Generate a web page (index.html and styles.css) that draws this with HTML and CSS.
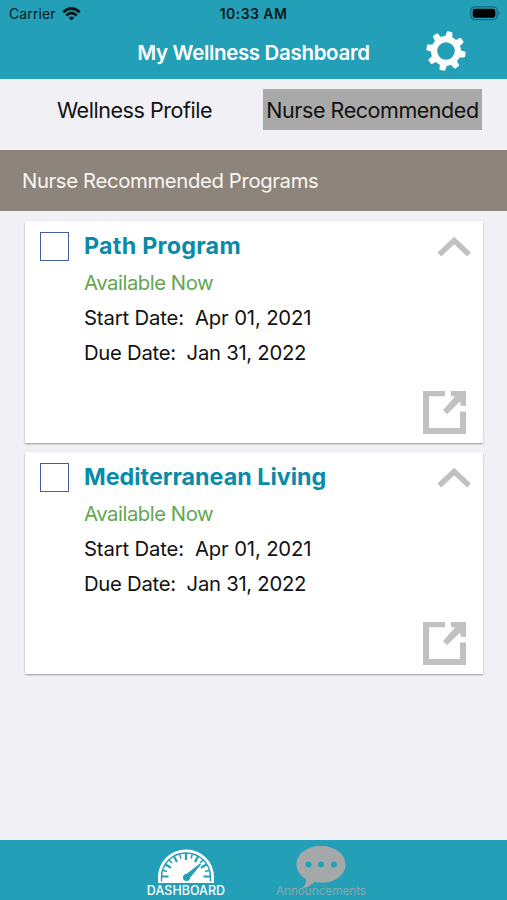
FILE: index.html
```html
<!DOCTYPE html>
<html lang="en">
<head>
<meta charset="utf-8">
<title>My Wellness Dashboard</title>
<link rel="stylesheet" href="styles.css">
</head>
<body>
<svg class="defs" width="0" height="0">
  <symbol id="chevron" viewBox="0 0 34 22"><path d="M2.300 18.500 17.200 4.500 32 18.500" fill="none" stroke="#c1c1c1" stroke-width="5.600"/></symbol>
  <symbol id="open" viewBox="0 0 44 44"><path d="M0 0H22V5.300H6V37H37V20.500H43V43H0Z" fill="#c1c1c1"/><path d="M27.700 0H43V15L37.700 14.700 37 10.500 24 23.200 20 19 32 5.500 28 5Z" fill="#c1c1c1"/></symbol>
</svg>
<header class="header">
  <div class="status">
    <div class="carrier"><span class="carrier-name">Carrier</span>
      <svg width="19" height="14" viewBox="0 0 19 14"><g fill="none" stroke="#08191d" stroke-width="2.700"><path d="M1.300 5.200Q9.500-2.200 17.700 5.200"/><path d="M4.200 8.400Q9.500 3.600 14.800 8.400"/></g><path d="M6.600 10.700Q9.500 8.300 12.400 10.700L9.500 13.600Z" fill="#08191d"/></svg>
    </div>
    <span class="time">10:33 AM</span>
    <svg class="battery" width="31" height="15" viewBox="0 0 31 15"><rect x=".8" y=".8" width="26.400" height="12.900" rx="4" fill="none" stroke="#176b7b" stroke-width="1.300"/><rect x="2.700" y="2.700" width="22.600" height="9.100" rx="2.300" fill="#000"/><path d="M28.500 5Q31 7.200 28.500 9.500Z" fill="#176b7b"/></svg>
  </div>
  <div class="titlebar">
    <h1 class="title">My Wellness Dashboard</h1>
    <svg class="gear" width="42" height="42" viewBox="-21 -21 42 42"><circle r="11.900" fill="none" stroke="#fff" stroke-width="6.200"/><g transform="rotate(11)" fill="#fff" stroke="#fff" stroke-width="2" stroke-linejoin="round"><g id="teeth"><path id="tooth" d="M-2.900-12-1.900-18.700H1.900L2.900-12Z"/><use href="#tooth" transform="rotate(90)"/><use href="#tooth" transform="rotate(180)"/><use href="#tooth" transform="rotate(270)"/></g><use href="#teeth" transform="rotate(45)"/></g></svg>
  </div>
</header>
<nav class="tabs">
  <span class="tab">Wellness Profile</span>
  <span class="tab active">Nurse Recommended</span>
</nav>
<h2 class="banner">Nurse Recommended Programs</h2>
<main class="programs">
  <article class="card">
    <span class="check"></span>
    <div class="details">
      <h3 class="name path">Path Program</h3>
      <p class="available">Available Now</p>
      <p class="start">Start Date:&nbsp; Apr 01, 2021</p>
      <p class="due">Due Date:&nbsp; Jan 31, 2022</p>
    </div>
    <div class="actions"><svg class="chevron"><use href="#chevron"/></svg><svg class="open"><use href="#open"/></svg></div>
  </article>
  <article class="card">
    <span class="check"></span>
    <div class="details">
      <h3 class="name">Mediterranean Living</h3>
      <p class="available">Available Now</p>
      <p class="start">Start Date:&nbsp; Apr 01, 2021</p>
      <p class="due">Due Date:&nbsp; Jan 31, 2022</p>
    </div>
    <div class="actions"><svg class="chevron"><use href="#chevron"/></svg><svg class="open"><use href="#open"/></svg></div>
  </article>
</main>
<footer class="footer">
  <div class="item dashboard">
    <svg width="58" height="36" viewBox="0 0 58 36"><path d="M1 34V28A28 27.500 0 0 1 57 28V34Z" fill="#fff"/><path d="M4.500 32.500V28A24.500 24 0 0 1 53.500 28V32.500" fill="none" stroke="#239fb8" stroke-width="1.500"/><g stroke="#239fb8" stroke-width="2.200"><path d="M5 27.500H11.500M46.500 27.500H53M29 4V11M8.500 15.500 14 18.800M49.500 15.500 44 18.800M17 7.500 20 13M41 7.500 38 13"/><path d="M6 21.500 10 22.500M12 11 15 14M22.800 5.500 23.900 9.500M35.200 5.500 34.100 9.500M46 11 43 14M52 21.500 48 22.500" stroke-width="1.500"/></g><path d="M27.500 26.500 43 14.500 44 15.500 32 30Z" fill="#239fb8"/><circle cx="29.500" cy="28.500" r="3.500" fill="#239fb8"/></svg>
    <span>DASHBOARD</span>
  </div>
  <div class="item announcements">
    <svg width="52" height="44" viewBox="0 0 52 44"><path d="M26 1C12 1 1.500 9 1.500 19.500C1.500 26 5.500 31 11 34C11.500 38 9.500 41 7.500 43C13.500 42.500 17 39.500 19.500 37Q22.500 37.800 26 37.800C40 37.800 50.500 30 50.500 19.500S40 1 26 1Z" fill="#a5a8a9"/><g fill="#239fb8"><circle cx="13.500" cy="19.500" r="3"/><circle cx="26" cy="19.500" r="3"/><circle cx="39" cy="19.500" r="3"/></g></svg>
    <span>Announcements</span>
  </div>
</footer>
</body>
</html>
```
FILE: styles.css
```css
* { box-sizing: border-box; }
body { margin: 0; width: 507px; height: 900px; overflow: hidden; display: flex; flex-direction: column; background: #f0f0f5; color: #111; font-family: Inter, "Liberation Sans", sans-serif; white-space: nowrap; }
h1, h2, h3, p { margin: 0; font-weight: 400; }
svg { display: block; flex: none; }
.defs { position: absolute; }
.header { height: 79px; background: #239fb8; }
.status { height: 27px; padding: 0 7px 0 9px; display: grid; grid-template-columns: 1fr auto 1fr; align-items: center; font-size: 14px; color: #08191d; }
.carrier { display: flex; align-items: center; gap: 6px; letter-spacing: .1px; }
.time { font-weight: 600; letter-spacing: .45px; margin-left: -2px; }
.battery { justify-self: end; margin-right: -1px; }
.titlebar { height: 51px; display: grid; grid-template-columns: 1fr auto 1fr; align-items: center; color: #fff; }
.title { grid-column: 2; font-size: 20.5px; letter-spacing: -.34px; font-weight: 600; line-height: 48px; }
.gear { margin: -4px 0 0 55px; }
.tabs { height: 71px; padding: 10px 24px 0 25px; display: grid; grid-template-columns: 219px 219px; gap: 19px; align-items: start; }
.tab { height: 41px; line-height: 42px; text-align: center; font-size: 21.5px; letter-spacing: -.45px; }
.active { background: #a9a9a9; }
.banner { height: 61px; padding-left: 22px; background: #8c837b; color: #faf6f1; font-size: 20.3px; letter-spacing: -.35px; line-height: 62px; }
.programs { padding: 10px 24px 0 25px; display: flex; flex-direction: column; gap: 9px; flex: 1; }
.card { height: 222px; padding: 11px 11px 8px 15px; display: grid; grid-template-columns: 29px 1fr 50px; column-gap: 15px; background: #fff; box-shadow: 0 1px 2px #999; border-radius: 1px; }
.check { width: 29px; height: 29px; border: 1px solid #405f9c; }
.details { font-size: 20.3px; margin-top: -1px; }
.name { font-size: 23.3px; line-height: 30px; height: 29px; font-weight: 700; color: #078ba9; }
.path { letter-spacing: .25px; }
.details p { height: 35px; line-height: 35px; }
.details .available { height: 40px; line-height: 45px; letter-spacing: -.45px; color: #62a64f; }
.start { letter-spacing: -.15px; }
.due { letter-spacing: -.28px; }
.actions { display: flex; flex-direction: column; justify-content: space-between; align-items: flex-end; }
.chevron { width: 34px; height: 22px; margin-top: 4px; margin-right: 1px; }
.open { width: 44px; height: 44px; margin-right: 5px; }
.footer { height: 60px; background: #239fb8; display: flex; justify-content: center; }
.item { width: 135px; display: flex; flex-direction: column; align-items: center; font-size: 11.7px; line-height: 14px; }
.dashboard { color: #fff; padding-top: 9px; font-weight: 500; font-size: 12.4px; }
.dashboard span { margin-top: -1px; letter-spacing: .1px; }
.announcements { color: #8fa5aa; padding-top: 5px; }
.announcements span { margin-top: -5px; }
```
